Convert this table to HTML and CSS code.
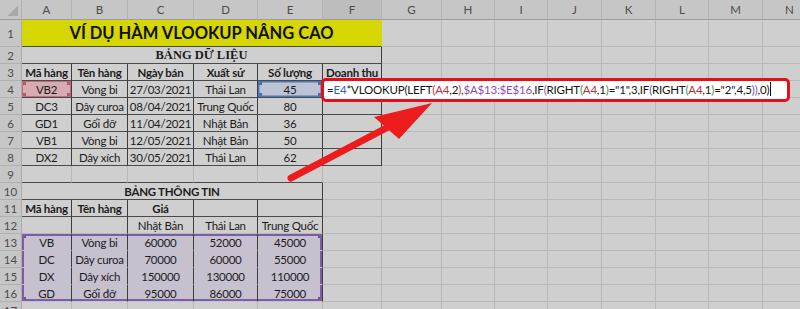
FILE: index.html
```html
<!DOCTYPE html>
<html lang="vi">
<head>
<meta charset="utf-8">
<title>VLOOKUP nâng cao</title>
<link rel="stylesheet" href="styles.css">
</head>
<body>
<div class="wrap">
<table class="sheet">
<colgroup>
<col class="w-rh"><col class="w-a"><col class="w-b"><col class="w-c"><col class="w-d"><col class="w-e"><col class="w-f"><col class="w-g"><col class="w-53"><col class="w-53"><col class="w-54"><col class="w-54"><col class="w-53"><col class="w-54">
</colgroup>
<tr class="hdr">
<th class="corner"></th><th>A</th><th>B</th><th>C</th><th>D</th><th>E</th><th class="active">F</th><th>G</th><th>H</th><th>I</th><th>J</th><th>K</th><th>L</th><th>M</th><th>N</th>
</tr>
<tr class="r1">
<th>1</th><td colspan="6" class="title B">VÍ DỤ HÀM VLOOKUP NÂNG CAO</td><td></td><td></td><td></td><td></td><td></td><td></td><td></td><td></td>
</tr>
<tr>
<th>2</th><td colspan="6" class="cap R B">BẢNG DỮ LIỆU</td><td></td><td></td><td></td><td></td><td></td><td></td><td></td><td></td>
</tr>
<tr>
<th>3</th><td class="b R B">Mã hàng</td><td class="b R B">Tên hàng</td><td class="b R B">Ngày bán</td><td class="b R B">Xuất sứ</td><td class="b R B">Số lượng</td><td class="b R B">Doanh thu</td><td></td><td></td><td></td><td></td><td></td><td></td><td></td><td></td>
</tr>
<tr>
<th>4</th><td class="R B refA">VB2</td><td class="R B">Vòng bi</td><td class="R B">27/03/2021</td><td class="R B">Thái Lan</td><td class="R B refE">45</td><td class="R B"></td><td></td><td></td><td></td><td></td><td></td><td></td><td></td><td></td>
</tr>
<tr>
<th>5</th><td class="R B">DC3</td><td class="R B">Dây curoa</td><td class="R B">08/04/2021</td><td class="R B">Trung Quốc</td><td class="R B">80</td><td class="R B"></td><td></td><td></td><td></td><td></td><td></td><td></td><td></td><td></td>
</tr>
<tr>
<th>6</th><td class="R B">GD1</td><td class="R B">Gối đỡ</td><td class="R B">11/04/2021</td><td class="R B">Nhật Bản</td><td class="R B">36</td><td class="R B"></td><td></td><td></td><td></td><td></td><td></td><td></td><td></td><td></td>
</tr>
<tr>
<th>7</th><td class="R B">VB1</td><td class="R B">Vòng bi</td><td class="R B">12/05/2021</td><td class="R B">Nhật Bản</td><td class="R B">50</td><td class="R B"></td><td></td><td></td><td></td><td></td><td></td><td></td><td></td><td></td>
</tr>
<tr>
<th>8</th><td class="R B">DX2</td><td class="R B">Dây xích</td><td class="R B">30/05/2021</td><td class="R B">Thái Lan</td><td class="R B">62</td><td class="R B"></td><td></td><td></td><td></td><td></td><td></td><td></td><td></td><td></td>
</tr>
<tr>
<th>9</th><td class="B"></td><td class="B"></td><td class="B"></td><td class="B"></td><td class="B"></td><td></td><td></td><td></td><td></td><td></td><td></td><td></td><td></td><td></td>
</tr>
<tr>
<th>10</th><td colspan="5" class="b R B">BẢNG THÔNG TIN</td><td></td><td></td><td></td><td></td><td></td><td></td><td></td><td></td><td></td>
</tr>
<tr>
<th>11</th><td class="b R B">Mã hàng</td><td class="b R B">Tên hàng</td><td class="b R B">Giá</td><td class="R B"></td><td class="R B"></td><td></td><td></td><td></td><td></td><td></td><td></td><td></td><td></td><td></td>
</tr>
<tr>
<th>12</th><td class="R"></td><td class="R"></td><td class="R">Nhật Bản</td><td class="R">Thái Lan</td><td class="R">Trung Quốc</td><td></td><td></td><td></td><td></td><td></td><td></td><td></td><td></td><td></td>
</tr>
<tr>
<th>13</th><td class="R sel st sl h-tl">VB</td><td class="R sel st">Vòng bi</td><td class="R sel st">60000</td><td class="R sel st">52000</td><td class="R sel st sr h-tr">45000</td><td></td><td></td><td></td><td></td><td></td><td></td><td></td><td></td><td></td>
</tr>
<tr>
<th>14</th><td class="R sel sl">DC</td><td class="R sel">Dây curoa</td><td class="R sel">70000</td><td class="R sel">60000</td><td class="R sel sr">55000</td><td></td><td></td><td></td><td></td><td></td><td></td><td></td><td></td><td></td>
</tr>
<tr>
<th>15</th><td class="R sel sl">DX</td><td class="R sel">Dây xích</td><td class="R sel">150000</td><td class="R sel">130000</td><td class="R sel sr">110000</td><td></td><td></td><td></td><td></td><td></td><td></td><td></td><td></td><td></td>
</tr>
<tr>
<th>16</th><td class="R sel sb sl h-bl">GD</td><td class="R sel sb">Gối đỡ</td><td class="R sel sb">95000</td><td class="R sel sb">86000</td><td class="R sel sb sr h-br">75000</td><td></td><td></td><td></td><td></td><td></td><td></td><td></td><td></td><td></td>
</tr>
<tr>
<th>17</th><td></td><td></td><td></td><td></td><td></td><td></td><td></td><td></td><td></td><td></td><td></td><td></td><td></td><td></td>
</tr>
</table>

<div class="formula-box">=<span class="fb">E4</span>*VLOOKUP(LEFT<span class="fr">(A4</span>,2<span class="fr">)</span>,<span class="fp">$A$13:$E$16</span>,IF<span class="fp">(</span>RIGHT<span class="fg">(</span><span class="fr">A4</span>,1<span class="fg">)</span>="1",3,IF<span class="fv">(</span>RIGHT<span class="fg">(</span><span class="fr">A4</span>,1<span class="fg">)</span>="2",4,5<span class="fv">)</span><span class="fp">)</span>,0)<span class="caret"></span></div>

<svg class="arrow" width="800" height="309" viewBox="0 0 800 309" aria-hidden="true">
<line x1="291" y1="178" x2="392" y2="125" stroke="#ec1c1c" stroke-width="7" stroke-linecap="round"/>
<polygon points="432,103 374,117 399,139" fill="#ec1c1c"/>
</svg>
</div>
</body>
</html>
```

FILE: styles.css
```css
* { box-sizing: border-box; }

html, body {
  margin: 0;
  padding: 0;
  width: 800px;
  height: 309px;
  overflow: hidden;
  background: #d0cfd0;
}

.wrap {
  position: relative;
  width: 800px;
  height: 309px;
  overflow: hidden;
}

.sheet {
  border-collapse: separate;
  border-spacing: 0;
  table-layout: fixed;
  width: 817px;
  font-family: "Lato", "Noto Sans", sans-serif;
  font-size: 11px;
  letter-spacing: -0.25px;
  color: #1c1c1c;
}

.w-rh { width: 22px; }
.w-a { width: 50px; }
.w-b { width: 56px; }
.w-c { width: 66px; }
.w-d { width: 64px; }
.w-e { width: 65px; }
.w-f { width: 59px; }
.w-g { width: 60px; }
.w-53 { width: 53px; }
.w-54 { width: 54px; }

.sheet tr { height: 17px; }
.sheet tr.hdr { height: 20px; }
.sheet tr.r1 { height: 27px; }

.sheet th,
.sheet td {
  padding: 0 1px;
  white-space: nowrap;
  overflow: hidden;
  text-align: center;
  vertical-align: middle;
  line-height: 15px;
  border-right: 1px solid #b9b8b9;
  border-bottom: 1px solid #b9b8b9;
}

.sheet td { background: #d0cfd0; font-size: 11.5px; }

.sheet th {
  background: #c6c6c6;
  color: #4c4c4c;
  font-weight: normal;
  font-size: 11.5px;
  letter-spacing: 0;
  border-right-color: #ababab;
  border-bottom-color: #b0b0b0;
}

.sheet tr.hdr th {
  border-bottom-color: #9d9d9d;
  border-right-color: #b3b3b3;
}

.sheet th.active {
  background: #bdbdbd;
  border-bottom: 1px solid #6f8f6f;
}

.sheet th.corner {
  background:
    linear-gradient(to bottom right, transparent 50%, #a9a9a9 50%) right 3px bottom 3px / 10px 10px no-repeat,
    #c6c6c6;
}

.sheet td.R { border-right-color: #3d3d3d; }
.sheet td.B { border-bottom-color: #4a4a4a; }

.sheet td.b { font-weight: bold; }

.sheet td.title {
  background: #d6d600;
  color: #111;
  font-weight: bold;
  font-size: 16.5px;
  letter-spacing: 0;
  border-right-color: #d6d600;
}

.sheet td.cap {
  font-family: "Liberation Serif", "DejaVu Serif", serif;
  font-weight: bold;
  font-size: 12.5px;
  letter-spacing: 0;
}

/* Referenced cells while editing the formula */
.sheet td.refA {
  background:
    linear-gradient(#b65a68, #b65a68) left top / 4px 4px no-repeat,
    linear-gradient(#b65a68, #b65a68) right top / 4px 4px no-repeat,
    linear-gradient(#b65a68, #b65a68) left bottom / 4px 4px no-repeat,
    linear-gradient(#b65a68, #b65a68) right bottom / 4px 4px no-repeat,
    #d6abb1;
  box-shadow: inset 0 0 0 1px #bf6f7b;
}

.sheet td.refE {
  background:
    linear-gradient(#3f6cb3, #3f6cb3) left top / 4px 4px no-repeat,
    linear-gradient(#3f6cb3, #3f6cb3) right top / 4px 4px no-repeat,
    linear-gradient(#3f6cb3, #3f6cb3) left bottom / 4px 4px no-repeat,
    linear-gradient(#3f6cb3, #3f6cb3) right bottom / 4px 4px no-repeat,
    #bcc4d4;
  box-shadow: inset 0 0 0 1.5px #4d76b8;
}

/* Referenced range A13:E16 */
.sheet td.sel {
  --t: 0px; --b: 0px; --l: 0px; --r: 0px;
  background-color: #c7c0cf;
  border-bottom-color: #c7c0cf;
  box-shadow:
    inset 0 var(--t) 0 #7b5fa6,
    inset 0 calc(-1 * var(--b)) 0 #7b5fa6,
    inset var(--l) 0 0 #7b5fa6,
    inset calc(-1 * var(--r)) 0 0 #7b5fa6;
}
.sheet td.st { --t: 2px; }
.sheet td.sb { --b: 2px; }
.sheet td.sl { --l: 2px; }
.sheet td.sr { --r: 2px; }

.sheet td.h-tl { background: linear-gradient(#6d4f9a, #6d4f9a) left top / 4px 4px no-repeat, #c7c0cf; }
.sheet td.h-tr { background: linear-gradient(#6d4f9a, #6d4f9a) right top / 4px 4px no-repeat, #c7c0cf; }
.sheet td.h-bl { background: linear-gradient(#6d4f9a, #6d4f9a) left bottom / 4px 4px no-repeat, #c7c0cf; }
.sheet td.h-br { background: linear-gradient(#6d4f9a, #6d4f9a) right bottom / 4px 4px no-repeat, #c7c0cf; }

/* Formula being edited in F4 */
.formula-box {
  position: absolute;
  left: 321px;
  top: 78px;
  width: 469px;
  height: 24px;
  border: 3px solid #e3101b;
  border-radius: 5px;
  background: #ffffff;
  padding: 0 0 0 3px;
  font-family: "Lato", "Noto Sans", sans-serif;
  font-size: 11.5px;
  letter-spacing: -0.2px;
  line-height: 18px;
  color: #151515;
  white-space: nowrap;
  overflow: hidden;
}

.fb { color: #2f66c4; }
.fr { color: #b7323b; }
.fp { color: #8a4fb4; }
.fg { color: #2f9a46; }
.fv { color: #5a4fb0; }

.caret {
  display: inline-block;
  width: 1px;
  height: 14px;
  background: #111;
  vertical-align: -2px;
  margin-left: 1px;
}

.arrow {
  position: absolute;
  left: 0;
  top: 0;
  pointer-events: none;
}
```
